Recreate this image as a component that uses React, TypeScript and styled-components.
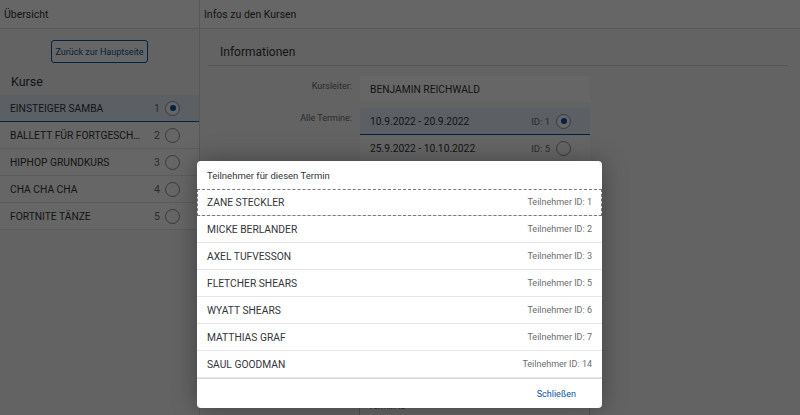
import React from "react";
import styled, { createGlobalStyle } from "styled-components";

const Global = createGlobalStyle`
  html, body { margin: 0; padding: 0; }
  body { font-family: Roboto, "Open Sans", Arial, sans-serif; color: #32363a; }
  * { box-sizing: border-box; }
`;

const Shell = styled.div`
  position: relative;
  width: 800px;
  height: 415px;
  overflow: hidden;
  display: flex;
  background: #f7f7f7;
`;

const Master = styled.div`
  width: 200px;
  flex: none;
  border-right: 1px solid #d9d9d9;
  display: flex;
  flex-direction: column;
`;

const Detail = styled.div`
  flex: 1;
  display: flex;
  flex-direction: column;
`;

const Bar = styled.div`
  height: 29px;
  flex: none;
  background: #fff;
  border-bottom: 1px solid #d9d9d9;
  display: flex;
  align-items: center;
  padding-left: 4px;
  font-size: 10.5px;
  color: #32363a;
`;

const BackRow = styled.div`
  display: flex;
  justify-content: center;
  padding-top: 11px;
`;

const BackButton = styled.button`
  height: 23px;
  width: 97px;
  border: 1px solid #0854a0;
  border-radius: 3px;
  background: #fff;
  color: #0854a0;
  font-family: inherit;
  font-size: 9px;
  white-space: nowrap;
  padding: 0;
`;

const ListTitle = styled.div`
  font-size: 12.5px;
  padding: 11px 0 0 11px;
  height: 32px;
  color: #32363a;
`;

const Item = styled.div<{ $sel?: boolean }>`
  height: 27px;
  display: flex;
  align-items: center;
  padding: 0 19px 0 10px;
  background: ${(p) => (p.$sel ? "#e5f0fa" : "#fff")};
  border-bottom: 1px solid ${(p) => (p.$sel ? "#0854a0" : "#e5e5e5")};
  font-size: 10.25px;
  color: #32363a;
  text-transform: uppercase;
`;

const ItemText = styled.span`
  flex: 1;
  min-width: 0;
  white-space: nowrap;
  overflow: hidden;
  text-overflow: ellipsis;
`;

const Num = styled.span`
  font-size: 10.5px;
  color: #6a6d70;
  margin: 0 5px 0 8px;
`;

const Radio = styled.span<{ $on?: boolean }>`
  width: 15px;
  height: 15px;
  border-radius: 50%;
  border: 1px solid #89919a;
  background: #fff;
  display: flex;
  align-items: center;
  justify-content: center;
  flex: none;
  &::after {
    content: "";
    display: ${(p) => (p.$on ? "block" : "none")};
    width: 6px;
    height: 6px;
    border-radius: 50%;
    background: #0854a0;
  }
`;

const Content = styled.div`
  padding: 16px 12px 0 8px;
`;

const Title = styled.div`
  font-size: 12px;
  padding: 0 0 6px 12px;
  border-bottom: 1px solid #d9d9d9;
  margin-bottom: 10px;
`;

const FormRow = styled.div`
  display: grid;
  grid-template-columns: 144px 230px;
  column-gap: 8px;
  margin-bottom: 6px;
`;

const Label = styled.div`
  font-size: 9px;
  color: #6a6d70;
  text-align: right;
  padding-top: 5px;
`;

const Field = styled.div`
  background: #fff;
  height: 26px;
  display: flex;
  align-items: center;
  padding: 0 10px;
  font-size: 10.25px;
  text-transform: uppercase;
`;

const DateList = styled.div`
  display: flex;
  flex-direction: column;
`;

const DateItem = styled(Item)`
  text-transform: none;
`;

const IdText = styled.span`
  font-size: 9.5px;
  color: #6a6d70;
  margin-right: 6px;
`;

const TerminBox = styled.div`
  grid-column: 2;
  margin-top: 222px;
  margin-left: -1px;
  height: 40px;
  border: 1px solid #c9c9c9;
  background: #fff;
  padding: 16px 8px 0;
  font-size: 9px;
  color: #6a6d70;
`;

const Overlay = styled.div`
  position: absolute;
  inset: 0;
  background: rgba(0, 0, 0, 0.6);
`;

const Dialog = styled.div`
  position: absolute;
  left: 197px;
  top: 161px;
  width: 405px;
  height: 247px;
  background: #fff;
  border-radius: 4px;
  box-shadow: 0 0 24px rgba(0, 0, 0, 0.35);
  display: flex;
  flex-direction: column;
  overflow: hidden;
`;

const DHead = styled.div`
  height: 28px;
  flex: none;
  display: flex;
  align-items: center;
  padding-left: 10px;
  font-size: 9.5px;
  color: #32363a;
`;

const PRow = styled.div<{ $focus?: boolean }>`
  height: 27px;
  flex: none;
  display: flex;
  align-items: center;
  justify-content: space-between;
  padding: 0 10px;
  border-bottom: 1px solid #e5e5e5;
  outline: ${(p) => (p.$focus ? "1px dashed #7a7a7a" : "none")};
  outline-offset: -1px;
  font-size: 10.25px;
`;

const PName = styled.span`
  text-transform: uppercase;
  color: #32363a;
`;

const PId = styled.span`
  font-size: 9px;
  color: #6a6d70;
`;

const DFoot = styled.div`
  flex: 1;
  display: flex;
  align-items: center;
  justify-content: flex-end;
  padding-right: 26px;
  border-top: 1px solid #d9d9d9;
`;

const Close = styled.button`
  border: none;
  background: none;
  color: #0854a0;
  font-family: inherit;
  font-size: 9px;
  padding: 0;
`;

const courses = ["Einsteiger Samba", "Ballett für Fortgeschrittene", "HipHop Grundkurs", "Cha Cha Cha", "Fortnite Tänze"];
const people: [string, number][] = [
  ["Zane Steckler", 1],
  ["Micke Berlander", 2],
  ["Axel Tufvesson", 3],
  ["Fletcher Shears", 5],
  ["Wyatt Shears", 6],
  ["Matthias Graf", 7],
  ["Saul Goodman", 14],
];

export default function App() {
  return (
    <Shell>
      <Global />
      <Master>
        <Bar>Übersicht</Bar>
        <BackRow>
          <BackButton>Zurück zur Hauptseite</BackButton>
        </BackRow>
        <ListTitle>Kurse</ListTitle>
        {courses.map((c, i) => (
          <Item key={c} $sel={i === 0}>
            <ItemText>{c}</ItemText>
            <Num>{i + 1}</Num>
            <Radio $on={i === 0} />
          </Item>
        ))}
      </Master>
      <Detail>
        <Bar>Infos zu den Kursen</Bar>
        <Content>
          <Title>Informationen</Title>
          <FormRow>
            <Label>Kursleiter:</Label>
            <Field>Benjamin Reichwald</Field>
          </FormRow>
          <FormRow>
            <Label>Alle Termine:</Label>
            <DateList>
              <DateItem $sel>
                <ItemText>10.9.2022 - 20.9.2022</ItemText>
                <IdText>ID: 1</IdText>
                <Radio $on />
              </DateItem>
              <DateItem>
                <ItemText>25.9.2022 - 10.10.2022</ItemText>
                <IdText>ID: 5</IdText>
                <Radio />
              </DateItem>
            </DateList>
            <TerminBox>Termin ID</TerminBox>
          </FormRow>
        </Content>
      </Detail>
      <Overlay />
      <Dialog>
        <DHead>Teilnehmer für diesen Termin</DHead>
        {people.map(([n, id], i) => (
          <PRow key={n} $focus={i === 0}>
            <PName>{n}</PName>
            <PId>Teilnehmer ID: {id}</PId>
          </PRow>
        ))}
        <DFoot>
          <Close>Schließen</Close>
        </DFoot>
      </Dialog>
    </Shell>
  );
}
